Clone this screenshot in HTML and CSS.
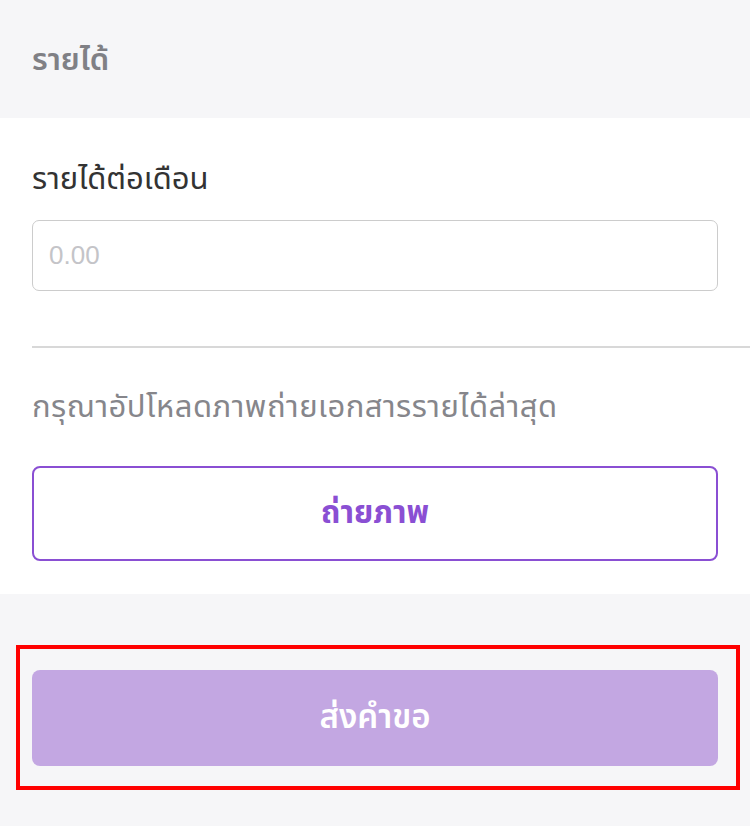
FILE: index.html
```html
<!DOCTYPE html>
<html lang="th">
<head>
<meta charset="utf-8">
<link rel="stylesheet" href="styles.css">
</head>
<body>
<div class="page">
  <div class="section-header">รายได้</div>
  <div class="card">
    <div class="field-label">รายได้ต่อเดือน</div>
    <input class="text-input" type="text" placeholder="0.00">
    <div class="divider"></div>
    <div class="helper">กรุณาอัปโหลดภาพถ่ายเอกสารรายได้ล่าสุด</div>
    <button class="btn-outline" type="button">ถ่ายภาพ</button>
  </div>
  <div class="footer">
    <button class="btn-submit" type="button">ส่งคำขอ</button>
    <div class="highlight"></div>
  </div>
</div>
</body>
</html>
```

FILE: styles.css
```css
html, body {
  margin: 0;
  padding: 0;
  background: #f6f6f8;
}
body {
  font-family: "Noto Sans Thai", "Noto Sans", "DejaVu Sans", sans-serif;
}
.page {
  width: 750px;
  min-height: 826px;
  background: #f6f6f8;
}
.section-header {
  height: 118px;
  box-sizing: border-box;
  padding: 2px 0 0 32px;
  display: flex;
  align-items: center;
  font-size: 31px;
  font-weight: 600;
  color: #808085;
}
.card {
  background: #ffffff;
  padding: 40px 0 33px 32px;
  display: flex;
  flex-direction: column;
}
.field-label {
  font-size: 31px;
  color: #333333;
  line-height: 44px;
  margin-right: 32px;
}
.text-input {
  margin: 18px 32px 0 0;
  height: 71px;
  box-sizing: border-box;
  border: 1.5px solid #cccccc;
  border-radius: 7px;
  padding: 0 16px;
  font-family: "Liberation Sans", "Noto Sans", sans-serif;
  font-size: 26px;
  color: #333;
  outline: none;
  background: #fff;
}
.text-input::placeholder {
  color: #c4c4c8;
}
.divider {
  margin-top: 55px;
  height: 2px;
  background: #d8d8d8;
}
.helper {
  margin-top: 38px;
  font-size: 31px;
  line-height: 44px;
  color: #86868b;
  margin-right: 32px;
  letter-spacing: 0.5px;
}
.btn-outline {
  margin: 36px 32px 0 0;
  height: 95px;
  box-sizing: border-box;
  border: 2px solid #8a4fd3;
  border-radius: 8px;
  background: #ffffff;
  color: #8a4fd3;
  font-family: inherit;
  font-size: 31px;
  font-weight: 700;
}
.footer {
  position: relative;
  padding: 76px 32px 60px 32px;
}
.btn-submit {
  display: block;
  width: 100%;
  height: 96px;
  border: none;
  border-radius: 8px;
  background: #c3a7e2;
  color: #ffffff;
  font-family: inherit;
  font-size: 33px;
  font-weight: 600;
}
.highlight {
  position: absolute;
  left: 16px;
  top: 51px;
  width: 724px;
  height: 145px;
  box-sizing: border-box;
  border: 4px solid #ff0000;
  pointer-events: none;
}
```
